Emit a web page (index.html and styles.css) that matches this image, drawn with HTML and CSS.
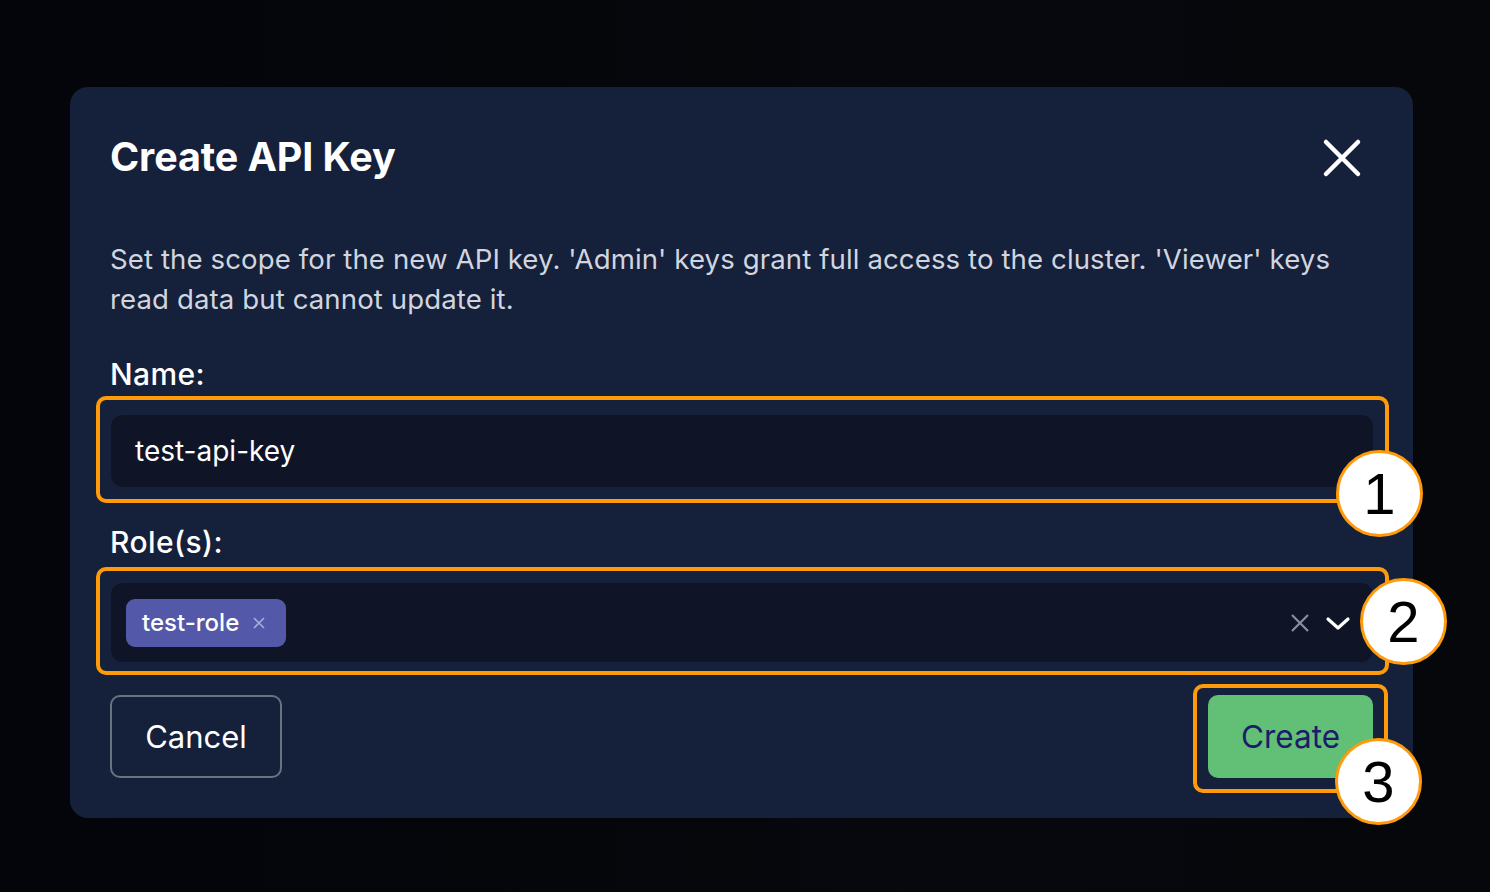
FILE: index.html
```html
<!DOCTYPE html>
<html lang="en">
<head>
<meta charset="utf-8">
<title>Create API Key</title>
<link rel="stylesheet" href="styles.css">
</head>
<body>
<div class="backdrop">
  <div class="modal">
    <div class="modal-header">
      <h2 class="modal-title">Create API Key</h2>
      <button class="close-btn" aria-label="Close">
        <svg width="40" height="40" viewBox="0 0 40 40"><path d="M4 4 L36 36 M36 4 L4 36" stroke="#fff" stroke-width="4.5" stroke-linecap="round" fill="none"/></svg>
      </button>
    </div>
    <p class="description">Set the scope for the new API key. 'Admin' keys grant full access to the cluster. 'Viewer' keys read data but cannot update it.</p>

    <label class="field-label">Name:</label>
    <div class="field">
      <div class="text-input">test-api-key</div>
      <div class="highlight hl-field"></div>
      <div class="badge badge-1">1</div>
    </div>

    <label class="field-label role-label">Role(s):</label>
    <div class="field">
      <div class="select-input">
        <span class="chip">test-role
          <svg class="chip-x" width="14" height="14" viewBox="0 0 14 14"><path d="M2 2 L12 12 M12 2 L2 12" stroke="#a9abd6" stroke-width="1.6" fill="none"/></svg>
        </span>
        <span class="select-actions">
          <svg width="22" height="22" viewBox="0 0 22 22"><path d="M3 3 L19 19 M19 3 L3 19" stroke="#8b8f9c" stroke-width="2.2" fill="none"/></svg>
          <svg width="26" height="16" viewBox="0 0 26 16"><path d="M3 4 L13 13 L23 4" stroke="#fff" stroke-width="3.2" stroke-linecap="round" stroke-linejoin="round" fill="none"/></svg>
        </span>
      </div>
      <div class="highlight hl-select"></div>
      <div class="badge badge-2">2</div>
    </div>

    <div class="actions">
      <button class="btn btn-cancel">Cancel</button>
      <div class="create-wrap">
        <button class="btn btn-create">Create</button>
        <div class="highlight hl-create"></div>
        <div class="badge badge-3">3</div>
      </div>
    </div>
  </div>
</div>
</body>
</html>
```

FILE: styles.css
```css
* { box-sizing: border-box; }
html, body {
  margin: 0;
  padding: 0;
  background: #05060a;
  width: 1490px;
  height: 892px;
  overflow: hidden;
  font-family: "Inter", "Noto Sans", sans-serif;
}
.backdrop {
  width: 1490px;
  height: 892px;
  padding-top: 87px;
  padding-left: 70px;
  background: linear-gradient(90deg, #04050a 0%, #05060a 35%, #07080d 60%, #06070b 100%);
}
.modal {
  width: 1343px;
  height: 731px;
  background: #15203b;
  border-radius: 18px;
  padding: 44px 40px 40px 41px;
}
.modal-header {
  display: flex;
  justify-content: space-between;
  align-items: center;
  height: 52px;
}
.modal-title {
  margin: 0 0 0 -1px;
  color: #ffffff;
  font-size: 39.5px;
  font-weight: 700;
  letter-spacing: -0.1px;
}
.close-btn {
  background: none;
  border: none;
  padding: 0;
  margin-right: 11px;
  margin-top: 2px;
  width: 40px;
  height: 40px;
  display: flex;
}
.description {
  margin: 56px 0 0 -1px;
  color: #d1d5df;
  font-size: 27.6px;
  line-height: 40px;
  letter-spacing: 0.1px;
}
.field-label {
  display: block;
  margin-top: 37px;
  color: #ffffff;
  font-size: 30px;
  line-height: 36px;
  font-weight: 500;
  letter-spacing: 0.4px;
  margin-left: -1px;
}
.role-label { margin-top: 37px; }
.field {
  position: relative;
  margin-top: 23px;
}
.text-input {
  height: 72px;
  background: #0f1427;
  border-radius: 12px;
  padding-left: 24px;
  display: flex;
  align-items: center;
  color: #ffffff;
  font-size: 28px;
}
.select-input {
  height: 79px;
  background: #0f1427;
  border-radius: 12px;
  padding: 0 22px 0 15px;
  display: flex;
  align-items: center;
  justify-content: space-between;
}
.chip {
  display: inline-flex;
  align-items: center;
  gap: 13px;
  height: 48px;
  padding: 0 20px 0 16px;
  background: #5359a8;
  border-radius: 9px;
  color: #ffffff;
  font-size: 24px;
  font-weight: 500;
}
.select-actions {
  display: flex;
  align-items: center;
  gap: 14px;
}
.highlight {
  position: absolute;
  border: 4px solid #ff9a0a;
  border-radius: 10px;
  pointer-events: none;
}
.hl-field { left: -15px; right: -16px; top: -19px; bottom: -16px; }
.hl-select { left: -15px; right: -16px; top: -16px; bottom: -13px; }
.badge {
  position: absolute;
  width: 87px;
  height: 87px;
  border-radius: 50%;
  background: #ffffff;
  border: 3px solid #ff9a0a;
  color: #000;
  font-family: "Liberation Sans", Arial, sans-serif;
  font-size: 58px;
  display: flex;
  align-items: center;
  justify-content: center;
  line-height: 1;
}
.badge-1 { right: -50px; top: 35px; }
.badge-2 { right: -74px; top: -5px; }
.actions {
  display: flex;
  justify-content: space-between;
  align-items: flex-start;
  margin-top: 33px;
}
.btn {
  height: 83px;
  border-radius: 10px;
  font-family: "Inter", sans-serif;
  font-size: 31px;
  padding: 0;
}
.btn-cancel {
  width: 172px;
  margin-left: -1px;
  background: transparent;
  border: 2px solid #6b7280;
  color: #ffffff;
}
.create-wrap {
  position: relative;
}
.btn-create {
  width: 165px;
  background: #62bf76;
  border: none;
  color: #1d1b6a;
  font-size: 31.5px;
}
.hl-create { left: -15px; right: -15px; top: -11px; bottom: -15px; }
.badge-3 { right: -49px; top: 43px; }
```
